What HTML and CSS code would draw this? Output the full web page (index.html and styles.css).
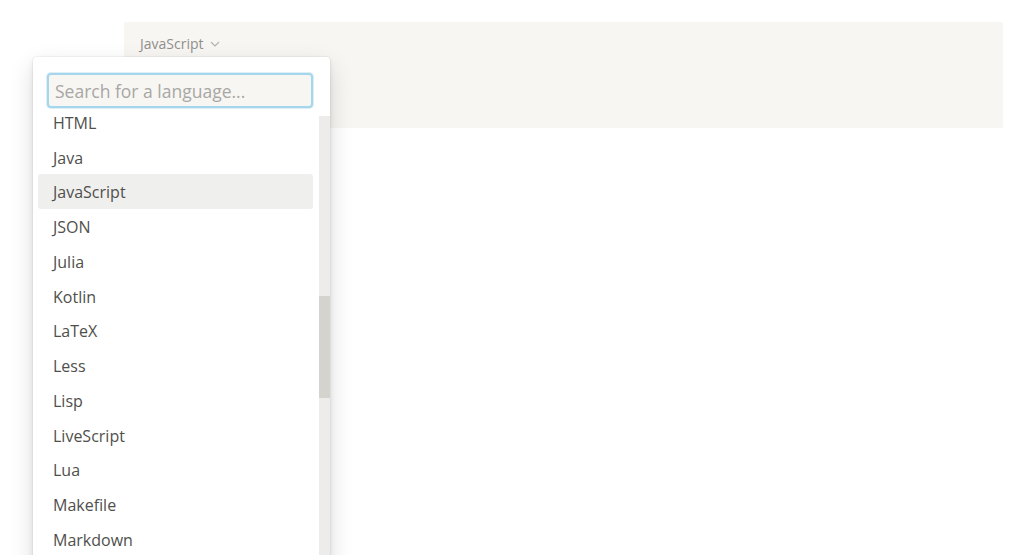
FILE: index.html
```html
<!DOCTYPE html>
<html lang="en">
<head>
  <meta charset="UTF-8">
  <title>Code block language</title>
  <link rel="stylesheet" href="styles.css">
</head>
<body>
<div class="page">
  <div class="code-block">
    <div class="lang-button">
      JavaScript
      <svg class="chevron" width="10" height="6" viewBox="0 0 10 6"><path d="M1 1l4 4 4-4" fill="none" stroke="currentColor" stroke-width="1.2"/></svg>
    </div>
  </div>
</div>

<div class="lang-menu">
  <div class="search-wrap">
    <input class="search" type="text" placeholder="Search for a language..." autofocus>
  </div>
  <div class="menu-body">
    <div class="lang-list">
      <div class="lang-items">
        <div class="lang-item">HTML</div>
        <div class="lang-item">Java</div>
        <div class="lang-item selected">JavaScript</div>
        <div class="lang-item">JSON</div>
        <div class="lang-item">Julia</div>
        <div class="lang-item">Kotlin</div>
        <div class="lang-item">LaTeX</div>
        <div class="lang-item">Less</div>
        <div class="lang-item">Lisp</div>
        <div class="lang-item">LiveScript</div>
        <div class="lang-item">Lua</div>
        <div class="lang-item">Makefile</div>
        <div class="lang-item">Markdown</div>
        <div class="lang-item">MATLAB</div>
      </div>
    </div>
    <div class="scroll-track">
      <div class="scroll-thumb"></div>
    </div>
  </div>
</div>
</body>
</html>
```

FILE: styles.css
```css
* {
  box-sizing: border-box;
}
body {
  margin: 0;
  background: #fff;
  font-family: "Open Sans", "Noto Sans", sans-serif;
  color: #504f4c;
  height: 555px;
  overflow: hidden;
}
.page {
  padding: 22px 21px 0 124px;
}
.code-block {
  background: #f7f6f3;
  height: 106px;
  border-radius: 2px;
  padding: 12px 16px;
}
.lang-button {
  display: flex;
  align-items: center;
  gap: 6px;
  font-size: 14px;
  color: #918f8b;
}
.chevron {
  color: #b5b3ae;
  margin-top: 1px;
}
.lang-menu {
  position: absolute;
  left: 33px;
  top: 57px;
  width: 297px;
  height: 520px;
  background: #fff;
  border-radius: 4px;
  box-shadow: 0 0 0 1px rgba(15, 15, 15, 0.04), 0 3px 6px rgba(15, 15, 15, 0.08), 0 9px 24px rgba(15, 15, 15, 0.14);
  display: flex;
  flex-direction: column;
  overflow: hidden;
}
.search-wrap {
  padding: 16px 17px 8px 14px;
}
.search {
  display: block;
  width: 100%;
  height: 35px;
  border: 2px solid #a5d6eb;
  border-radius: 4px;
  box-shadow: 0 0 0 1px rgba(165, 214, 235, 0.4);
  background: #f7f6f3;
  font-family: inherit;
  font-size: 17.5px;
  padding: 0 6px;
  color: #37352f;
  outline: none;
}
.search::placeholder {
  color: #a8a7a4;
}
.menu-body {
  flex: 1;
  display: flex;
  min-height: 0;
}
.lang-list {
  flex: 1;
  overflow: hidden;
  padding: 0 6px 0 5px;
}
.lang-items {
  margin-top: -11.5px;
}
.lang-item {
  height: 34.75px;
  display: flex;
  align-items: center;
  padding: 2px 15px 0;
  font-size: 16px;
  border-radius: 3px;
}
.lang-item.selected {
  background: #efefee;
}
.scroll-track {
  width: 11px;
  background: #edecea;
}
.scroll-thumb {
  margin-top: 180px;
  height: 102px;
  background: #d5d3ce;
}
```
